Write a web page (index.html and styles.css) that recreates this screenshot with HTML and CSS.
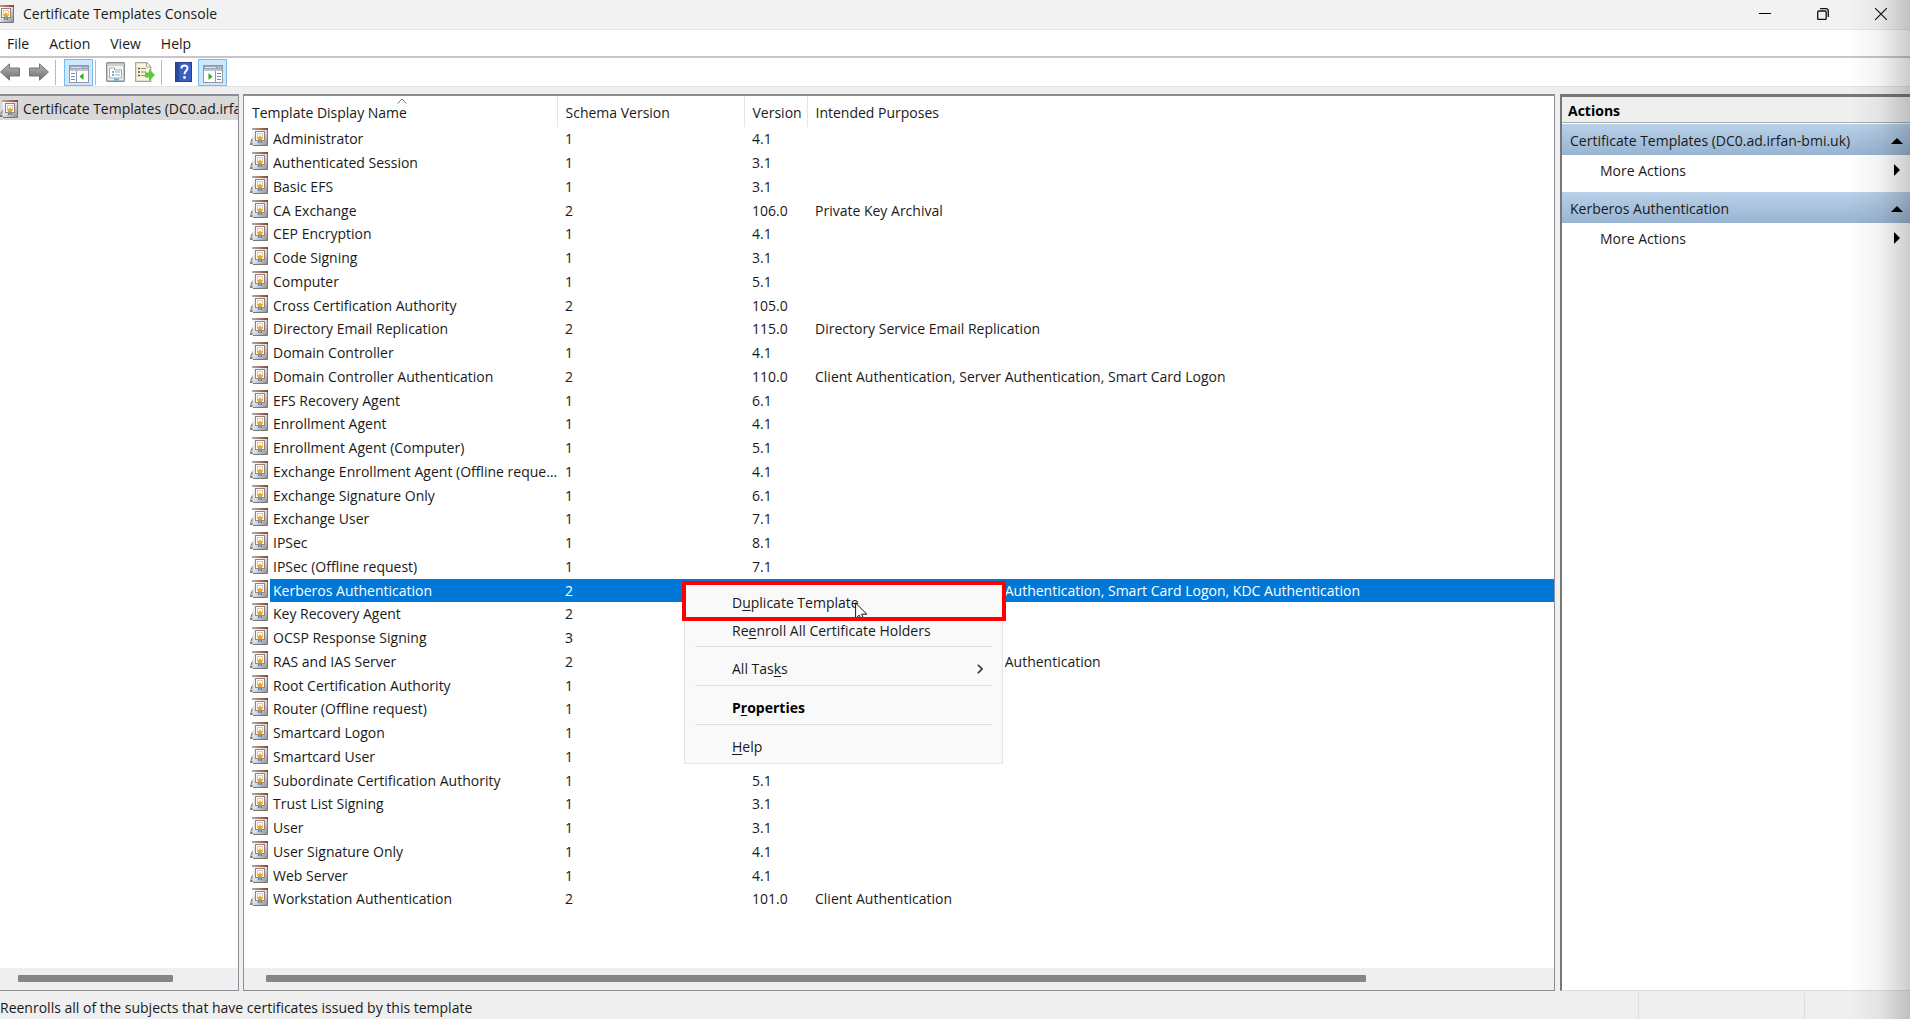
FILE: index.html
```html
<!DOCTYPE html>
<html lang="en">
<head>
<meta charset="utf-8">
<title>Certificate Templates Console</title>
<link rel="stylesheet" href="styles.css">
</head>
<body>
<svg class="defs" aria-hidden="true">
  <defs>
    <linearGradient id="frame" x1="0" y1="0" x2="1" y2="1"><stop offset="0" stop-color="#ffffff"/><stop offset=".5" stop-color="#dedede"/><stop offset="1" stop-color="#8c8c8c"/></linearGradient>
    <linearGradient id="lid" x1="0" y1="0" x2="1" y2="0"><stop offset="0" stop-color="#c9a293"/><stop offset="1" stop-color="#7d4a38"/></linearGradient>
    <linearGradient id="arrowfill" x1="0" y1="0" x2="0" y2="1"><stop offset="0" stop-color="#b5b5b5"/><stop offset="1" stop-color="#6e6e6e"/></linearGradient>
    <symbol id="cert" viewBox="0 0 18 18">
      <path d="M0 16.500l1-4.500 2-3v8H0z" fill="#777"/>
      <path d="M1 15h1.500v-3z" fill="#eee"/>
      <rect x="2.500" y="1" width="15" height="16.500" fill="url(#frame)"/>
      <path d="M17.500 1v16.500H3" fill="none" stroke="#777"/>
      <rect x="2" y="0" width="16" height="2" fill="url(#lid)"/>
      <rect x="5.500" y="3.500" width="9" height="9" fill="#fdfdfd" stroke="#94817a"/>
      <rect x="7.500" y="5.500" width="5" height="5" fill="#fff" stroke="#ddc6b8"/>
      <path d="M8 11h1.500v4H8zM10.500 11H12v4h-1.500z" fill="#3f7fdc"/>
      <path d="M10 6.800l1 2 2.300.5-1.600 1.500.2 2.200-1.900-.9-1.900.9.200-2.200-1.600-1.500 2.300-.5z" fill="#f0a81e"/>
    </symbol>
    <symbol id="group-arrow" viewBox="0 0 12 6"><path d="M0 6l6-6 6 6z"/></symbol>
    <symbol id="more-arrow" viewBox="0 0 6 12"><path d="M0 0l6 6-6 6z"/></symbol>
  </defs>
</svg>

<header class="titlebar">
  <svg class="cert"><use href="#cert"/></svg>
  <h1>Certificate Templates Console</h1>
  <div class="window-buttons">
    <button aria-label="Minimize"><svg width="12" height="12" viewBox="0 0 12 12"><path d="M0 5.500h12" stroke="#000" fill="none"/></svg></button>
    <button aria-label="Restore"><svg width="12" height="12" viewBox="0 0 12 12" fill="none" stroke="#111" stroke-width="1.300"><rect x=".7" y="3" width="8.500" height="8.500" rx="1"/><path d="M3 .7h5.800a2.500 2.500 0 0 1 2.500 2.500V9"/></svg></button>
    <button aria-label="Close"><svg width="12" height="12" viewBox="0 0 12 12"><path d="M0 0l12 12M12 0L0 12" stroke="#111" stroke-width="1.200" fill="none"/></svg></button>
  </div>
</header>

<nav class="menubar">
  <button>File</button><button>Action</button><button>View</button><button>Help</button>
</nav>

<div class="toolbar" role="toolbar">
  <button class="tool" aria-label="Back"><svg width="20" height="18" viewBox="0 0 20 18"><path d="M.5 9L9.500.8V5h10v8h-10v4.200z" fill="url(#arrowfill)" stroke="#777"/></svg></button>
  <button class="tool" aria-label="Forward"><svg width="20" height="18" viewBox="0 0 20 18"><path d="M19.500 9l-9-8.200V5H.5v8h10v4.200z" fill="url(#arrowfill)" stroke="#777"/></svg></button>
  <span class="rule"></span>
  <button class="tool on" aria-label="Show or hide console tree"><svg width="20" height="18" viewBox="0 0 20 18"><rect x=".5" y=".5" width="19" height="17" fill="#fff" stroke="#8f9aa5"/><path d="M1 1h18v5H1z" fill="#9aa6b2"/><path d="M2 2.500h11M15 2.500h1M17 2.500h1M1 5h18" stroke="#dfe6ec"/><path d="M7.500 6v11" stroke="#8f9aa5"/><path d="M2 8.500h4M2 11.500h4M2 14.500h4" stroke="#5a93c0"/><path d="M14.500 8v7L10.500 11.500z" fill="#32ad22"/></svg></button>
  <span class="rule"></span>
  <button class="tool" aria-label="Properties"><svg width="19" height="20" viewBox="0 0 19 20"><rect x=".7" y=".7" width="17.600" height="18.600" rx="1" fill="#f3f3f3" stroke="#8c8c8c" stroke-width="1.400"/><path d="M2 3h15" stroke="#aaa"/><path d="M3.500 6h5v2h7v8h-12z" fill="#fff" stroke="#9aa9b5"/><path d="M6 10h2M6 13h2" stroke="#4d8fd0" stroke-width="1.500"/><path d="M9 10h5M9 13h5" stroke="#9aa9b5"/><path d="M8 17.500h5" stroke="#4cb9e8" stroke-width="2"/></svg></button>
  <button class="tool" aria-label="Export list"><svg width="20" height="20" viewBox="0 0 20 20"><path d="M.7.7h11l4 4v14.600H.7z" fill="#fbf5dc" stroke="#a9a48f" stroke-width="1.200"/><path d="M11.500 1v4h4" fill="#fff" stroke="#a9a48f"/><path d="M3 6.500h2M3 10h2M3 13.500h2" stroke="#555" stroke-width="1.500"/><path d="M6 6.500h5M6 10h5M6 13.500h4" stroke="#888"/><path d="M10 10.500h4V7l6 6-6 6v-3.500h-4z" fill="#58cc3c"/></svg></button>
  <span class="rule"></span>
  <button class="tool" aria-label="Help"><svg width="17" height="20" viewBox="0 0 17 20"><rect x=".5" y=".5" width="16" height="19" fill="#3a5fc4" stroke="#27408d"/><path d="M1 1h3v18H1z" fill="#2b4796"/><path d="M6.500 6.500c0-4 6-4 6-.3 0 2.500-3 2.800-3 6" fill="none" stroke="#fff" stroke-width="2"/><circle cx="9.500" cy="15.500" r="1.400" fill="#fff"/></svg></button>
  <button class="tool on" aria-label="Show or hide action pane"><svg width="20" height="18" viewBox="0 0 20 18"><rect x=".5" y=".5" width="19" height="17" fill="#fff" stroke="#8f9aa5"/><path d="M1 1h18v5H1z" fill="#9aa6b2"/><path d="M2 2.500h11M15 2.500h1M17 2.500h1M1 5h18" stroke="#dfe6ec"/><path d="M12.500 6v11" stroke="#8f9aa5"/><path d="M14 8.500h4M14 11.500h4M14 14.500h4" stroke="#5a93c0"/><path d="M5.500 8v7L9.500 11.500z" fill="#32ad22"/></svg></button>
</div>

<main class="panes">
  <aside class="pane tree">
    <a class="node" href="#templates"><svg class="cert"><use href="#cert"/></svg><span>Certificate Templates (DC0.ad.irfa</span></a>
    <div class="scrollbar"><span class="thumb"></span></div>
  </aside>

  <section class="pane list" id="templates">
    <table>
      <colgroup><col class="c-name"><col class="c-schema"><col class="c-version"><col></colgroup>
      <thead><tr><th class="sorted">Template Display Name<svg width="10" height="6" viewBox="0 0 10 6"><path d="M.5 5.500L5 1l4.500 4.500" fill="none" stroke="#777"/></svg></th><th>Schema Version</th><th>Version</th><th>Intended Purposes</th></tr></thead>
      <tbody>
        <tr><td><svg class="cert"><use href="#cert"/></svg>Administrator</td><td>1</td><td>4.1</td><td></td></tr>
        <tr><td><svg class="cert"><use href="#cert"/></svg>Authenticated Session</td><td>1</td><td>3.1</td><td></td></tr>
        <tr><td><svg class="cert"><use href="#cert"/></svg>Basic EFS</td><td>1</td><td>3.1</td><td></td></tr>
        <tr><td><svg class="cert"><use href="#cert"/></svg>CA Exchange</td><td>2</td><td>106.0</td><td>Private Key Archival</td></tr>
        <tr><td><svg class="cert"><use href="#cert"/></svg>CEP Encryption</td><td>1</td><td>4.1</td><td></td></tr>
        <tr><td><svg class="cert"><use href="#cert"/></svg>Code Signing</td><td>1</td><td>3.1</td><td></td></tr>
        <tr><td><svg class="cert"><use href="#cert"/></svg>Computer</td><td>1</td><td>5.1</td><td></td></tr>
        <tr><td><svg class="cert"><use href="#cert"/></svg>Cross Certification Authority</td><td>2</td><td>105.0</td><td></td></tr>
        <tr><td><svg class="cert"><use href="#cert"/></svg>Directory Email Replication</td><td>2</td><td>115.0</td><td>Directory Service Email Replication</td></tr>
        <tr><td><svg class="cert"><use href="#cert"/></svg>Domain Controller</td><td>1</td><td>4.1</td><td></td></tr>
        <tr><td><svg class="cert"><use href="#cert"/></svg>Domain Controller Authentication</td><td>2</td><td>110.0</td><td>Client Authentication, Server Authentication, Smart Card Logon</td></tr>
        <tr><td><svg class="cert"><use href="#cert"/></svg>EFS Recovery Agent</td><td>1</td><td>6.1</td><td></td></tr>
        <tr><td><svg class="cert"><use href="#cert"/></svg>Enrollment Agent</td><td>1</td><td>4.1</td><td></td></tr>
        <tr><td><svg class="cert"><use href="#cert"/></svg>Enrollment Agent (Computer)</td><td>1</td><td>5.1</td><td></td></tr>
        <tr><td><svg class="cert"><use href="#cert"/></svg>Exchange Enrollment Agent (Offline reque…</td><td>1</td><td>4.1</td><td></td></tr>
        <tr><td><svg class="cert"><use href="#cert"/></svg>Exchange Signature Only</td><td>1</td><td>6.1</td><td></td></tr>
        <tr><td><svg class="cert"><use href="#cert"/></svg>Exchange User</td><td>1</td><td>7.1</td><td></td></tr>
        <tr><td><svg class="cert"><use href="#cert"/></svg>IPSec</td><td>1</td><td>8.1</td><td></td></tr>
        <tr><td><svg class="cert"><use href="#cert"/></svg>IPSec (Offline request)</td><td>1</td><td>7.1</td><td></td></tr>
        <tr class="selected"><td><svg class="cert"><use href="#cert"/></svg>Kerberos Authentication</td><td>2</td><td></td><td>Client Authentication, Server Authentication, Smart Card Logon, KDC Authentication</td></tr>
        <tr><td><svg class="cert"><use href="#cert"/></svg>Key Recovery Agent</td><td>2</td><td></td><td></td></tr>
        <tr><td><svg class="cert"><use href="#cert"/></svg>OCSP Response Signing</td><td>3</td><td></td><td></td></tr>
        <tr><td><svg class="cert"><use href="#cert"/></svg>RAS and IAS Server</td><td>2</td><td></td><td>Client Authentication, Server Authentication</td></tr>
        <tr><td><svg class="cert"><use href="#cert"/></svg>Root Certification Authority</td><td>1</td><td></td><td></td></tr>
        <tr><td><svg class="cert"><use href="#cert"/></svg>Router (Offline request)</td><td>1</td><td></td><td></td></tr>
        <tr><td><svg class="cert"><use href="#cert"/></svg>Smartcard Logon</td><td>1</td><td></td><td></td></tr>
        <tr><td><svg class="cert"><use href="#cert"/></svg>Smartcard User</td><td>1</td><td></td><td></td></tr>
        <tr><td><svg class="cert"><use href="#cert"/></svg>Subordinate Certification Authority</td><td>1</td><td>5.1</td><td></td></tr>
        <tr><td><svg class="cert"><use href="#cert"/></svg>Trust List Signing</td><td>1</td><td>3.1</td><td></td></tr>
        <tr><td><svg class="cert"><use href="#cert"/></svg>User</td><td>1</td><td>3.1</td><td></td></tr>
        <tr><td><svg class="cert"><use href="#cert"/></svg>User Signature Only</td><td>1</td><td>4.1</td><td></td></tr>
        <tr><td><svg class="cert"><use href="#cert"/></svg>Web Server</td><td>1</td><td>4.1</td><td></td></tr>
        <tr><td><svg class="cert"><use href="#cert"/></svg>Workstation Authentication</td><td>2</td><td>101.0</td><td>Client Authentication</td></tr>
      </tbody>
    </table>
    <div class="scrollbar"><span class="thumb"></span></div>
  </section>

  <aside class="actions">
    <h2>Actions</h2>
    <button class="group"><span>Certificate Templates (DC0.ad.irfan-bmi.uk)</span><svg width="12" height="6"><use href="#group-arrow"/></svg></button>
    <button class="more"><span>More Actions</span><svg width="6" height="12"><use href="#more-arrow"/></svg></button>
    <button class="group"><span>Kerberos Authentication</span><svg width="12" height="6"><use href="#group-arrow"/></svg></button>
    <button class="more"><span>More Actions</span><svg width="6" height="12"><use href="#more-arrow"/></svg></button>
  </aside>
</main>

<footer class="statusbar"><span>Reenrolls all of the subjects that have certificates issued by this template</span><span></span><span></span></footer>

<div class="context-menu" role="menu">
  <button role="menuitem" class="first"><span>D<u>u</u>plicate Template</span></button>
  <button role="menuitem" class="second"><span>Re<u>e</u>nroll All Certificate Holders</span></button>
  <hr>
  <button role="menuitem"><span>All Tas<u>k</u>s</span><svg width="6" height="10" viewBox="0 0 6 10"><path d="M.8.8L5 5 .8 9.200" fill="none" stroke="#333" stroke-width="1.600"/></svg></button>
  <hr>
  <button role="menuitem" class="default"><span>P<u>r</u>operties</span></button>
  <hr>
  <button role="menuitem"><span><u>H</u>elp</span></button>
  <svg class="cursor" width="13" height="20" viewBox="0 0 13 20"><path d="M.6 1v15.500l3.600-3.400 2.500 5.800 2.400-1-2.500-5.700h5.200z" fill="#fff" stroke="#111"/></svg>
  <span class="highlight"></span>
</div>
<div class="edge-shade"></div>
</body>
</html>
```
FILE: styles.css
```css
* { box-sizing: border-box; }
body {
  margin: 0;
  height: 100vh;
  overflow: hidden;
  display: flex;
  flex-direction: column;
  background: #efefef;
  color: #1a1a1a;
  font: 14px/20px "Open Sans", sans-serif;
}
button {
  border: 0;
  padding: 0;
  background: none;
  color: inherit;
  font: inherit;
  text-align: left;
}
h1, h2 { margin: 0; font: inherit; }
svg { flex: none; }
.defs { position: absolute; width: 0; height: 0; }
.cert { width: 18px; height: 18px; }

.titlebar {
  display: flex;
  align-items: center;
  height: 30px;
  padding-bottom: 2px;
  background: #f2f2f2;
  border-bottom: 1px solid #e4e4e4;
}
.titlebar .cert { margin-left: -4px; }
.titlebar h1 { flex: 1; padding-left: 9px; }
.window-buttons { display: flex; }
.window-buttons button {
  width: 58px;
  height: 28px;
  display: grid;
  place-items: center;
}

.menubar {
  display: flex;
  align-items: center;
  gap: 20px;
  height: 28px;
  padding: 2px 0 0 7px;
  background: #fff;
  border-bottom: 2px solid #c6c6ca;
}

.toolbar {
  display: flex;
  align-items: center;
  height: 29px;
  background: #fff;
  border-bottom: 1px solid #e2e2e2;
}
.tool { height: 27px; width: 29px; display: grid; place-items: center; }
.tool:first-child { width: 20px; margin-right: 4px; }
.tool.on { background: #cce8ff; border: 1px solid #7abcf0; padding-top: 4px; }
.rule { width: 1px; height: 25px; background: #b9b9b9; margin: 0 8px 0 2px; }
.on + .rule { margin-right: 5px; }
.tool:not(.on) + .rule:nth-last-child(3) { margin-right: 7px; }

.panes {
  flex: 1;
  min-height: 0;
  margin-top: 7px;
  display: grid;
  grid-template-columns: 239px minmax(0, 1fr) 351px;
  column-gap: 4px;
}
.pane {
  display: flex;
  flex-direction: column;
  min-width: 0;
  overflow: hidden;
  background: #fff;
  border: solid #8d8d99;
  border-width: 2px 1px 1px;
}
.tree { border-left: 0; }
.node {
  display: flex;
  align-items: center;
  gap: 5px;
  height: 24px;
  padding-top: 1px;
  background: #d9d9d9;
  color: inherit;
  text-decoration: none;
  white-space: nowrap;
}
.scrollbar {
  flex: none;
  margin-top: auto;
  height: 22px;
  padding: 7px 0;
  background: #efefef;
}
.thumb { display: block; height: 7px; background: #868686; border-radius: 1px; }
.tree .thumb { width: 155px; margin-left: 18px; }
.list .thumb { width: 84%; margin-left: 22px; }

table {
  width: 100%;
  table-layout: fixed;
  border-collapse: collapse;
}
.c-name { width: 313px; }
.c-schema { width: 187px; }
.c-version { width: 63px; }
th, td {
  padding: 0 0 0 8px;
  font-weight: 400;
  text-align: left;
  white-space: nowrap;
}
th { height: 31px; padding-top: 2px; border-right: 1px solid #e5e5e5; }
th:last-child { border-right: 0; }
.sorted { position: relative; }
.sorted svg { position: absolute; top: 2px; left: 49%; }
tbody tr { height: 24px; }
tbody tr:nth-child(4n) { height: 23px; }
td { line-height: 22px; }
td:first-child { padding-left: 6px; }
td .cert { margin-right: 5px; vertical-align: -2px; }
.selected td { background: #0078d7; color: #fff; }
.selected td:first-child { background: linear-gradient(to right, #fff 26px, #0078d7 26px); }

.actions {
  margin-left: 1px;
  background: #fff;
  border: solid #777;
  border-width: 3px 0 0 2px;
  border-bottom: 1px solid #ddd;
}
.actions h2 {
  height: 26px;
  padding: 4px 6px 0;
  background: #efefef;
  border-bottom: 1px solid #aaa;
  color: #000;
  font-weight: 700;
}
.actions button {
  display: flex;
  align-items: center;
  justify-content: space-between;
  width: 100%;
}
.actions .group {
  height: 31px;
  margin-top: 1px;
  padding: 3px 7px 0 8px;
  background: linear-gradient(#b9d1ea, #99b4d1);
}
.actions .more { height: 36px; padding: 0 10px 4px 38px; }
.actions .more svg { margin-bottom: 2px; }

.statusbar {
  display: grid;
  grid-template-columns: minmax(0, 1fr) 166px 106px;
  height: 28px;
  line-height: 34px;
}
.statusbar span + span { border-left: 1px solid #ddd; margin-top: 2px; }

.context-menu {
  position: absolute;
  left: 684px;
  top: 581px;
  width: 319px;
  background: #f9f9f9;
  border: 1px solid #e6e6e6;
}
.context-menu button {
  display: flex;
  align-items: center;
  width: 100%;
  height: 38px;
  padding: 6px 19px 0 47px;
  color: #1a1a1a;
}
.context-menu button svg { margin-left: auto; }
.context-menu .first { padding-top: 4px; }
.context-menu .second { height: 26px; padding: 0 0 5px 47px; }
.context-menu .default { font-weight: 700; color: #000; }
.context-menu u { text-underline-offset: 2px; }
.context-menu hr { margin: 0 10px; border: 0; border-top: 1px solid #e0e0e0; }
.cursor { position: absolute; left: 170px; top: 20px; }
.highlight {
  position: absolute;
  inset: -1px -4px auto -3px;
  height: 40px;
  border: 4px solid #f00;
}
.edge-shade {
  position: absolute;
  inset: 0 0 0 auto;
  width: 60px;
  background: linear-gradient(to right, rgba(0, 0, 0, 0), rgba(0, 0, 0, .05) 50%, rgba(0, 0, 0, .2));
  pointer-events: none;
}
```
